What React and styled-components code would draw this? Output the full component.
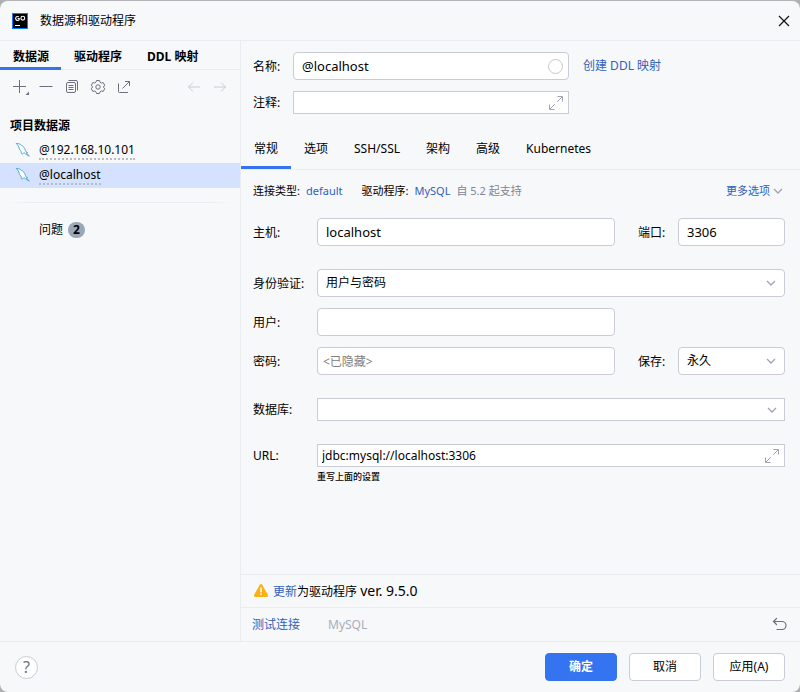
import React from "react";
import styled, { createGlobalStyle, css } from "styled-components";

const GlobalStyle = createGlobalStyle`
  * {
    box-sizing: border-box;
  }
  body {
    margin: 0;
    background: #aeafb1;
    color: #000;
    font-family: "Noto Sans", "Noto Sans CJK SC", sans-serif;
    font-size: 12px;
    line-height: 16px;
  }
  button,
  input,
  select {
    font: inherit;
    color: inherit;
  }
`;

/* ---------- icons ---------- */

const Svg = ({ size = 16, children, ...rest }) => (
  <svg
    width={size}
    height={size}
    viewBox="0 0 16 16"
    fill="none"
    stroke="currentColor"
    aria-hidden="true"
    {...rest}
  >
    {children}
  </svg>
);

const GoLandIcon = () => (
  <Svg stroke="none">
    <rect width="16" height="16" fill="#087cfa" />
    <rect x="1" y="1" width="14" height="14" fill="#000" />
    <path
      d="M6.9 3.9A2 2 0 1 0 7.2 6.7V5.5H5.6"
      fill="none"
      stroke="#fff"
      strokeWidth="1.1"
    />
    <circle cx="10.8" cy="5.2" r="1.9" stroke="#fff" strokeWidth="1.1" />
    <rect x="3" y="12" width="5" height="1" fill="#fff" />
  </Svg>
);

const CloseIcon = () => (
  <Svg strokeWidth="1.2">
    <path d="M3 3l10 10M13 3L3 13" />
  </Svg>
);

const PlusIcon = () => (
  <Svg overflow="visible">
    <path d="M1 7.5h13M7.5 1v13" />
    <path d="M17 12.5V16h-3.5z" fill="currentColor" stroke="none" />
  </Svg>
);

const MinusIcon = () => (
  <Svg>
    <path d="M1.5 7.5h13" />
  </Svg>
);

const CopyIcon = () => (
  <Svg>
    <rect x="2.500" y="3.500" width="9" height="10" rx="1.500" />
    <path d="M4.500 1.500H12A1.500 1.500 0 0 1 13.500 3v8.500M4.500 6.500h5M4.500 8.500h5M4.500 10.500h5" />
  </Svg>
);

const GearIcon = () => (
  <Svg strokeLinejoin="round">
    <path d="M6.500 1.500h3l.6 1.800 1.200.7 1.900-.4 1.500 2.600L13.400 8l1.300 1.800-1.500 2.600-1.900-.4-1.200.7-.6 1.800h-3l-.6-1.800-1.200-.7-1.900.4-1.500-2.600L2.600 8 1.300 6.200l1.500-2.600 1.900.4 1.200-.7z" />
    <circle cx="8" cy="8" r="2.200" />
  </Svg>
);

const ExportIcon = () => (
  <Svg>
    <path d="M2.500 4.500v8.100a.9.9 0 0 0 .9.9H12M9 2.500h4.500V7M13.500 2.500L6.500 9.500" />
  </Svg>
);

const LeftIcon = () => (
  <Svg>
    <path d="M14 8H2.500M7 3.500L2.500 8 7 12.500" />
  </Svg>
);

const RightIcon = () => (
  <Svg>
    <path d="M2 8h11.500M9 3.500L13.500 8 9 12.500" />
  </Svg>
);

const DolphinIcon = () => (
  <Svg stroke="#4aa3cf" strokeLinejoin="round" strokeLinecap="round">
    <path
      d="M1.500 .6C3.300 0 5 1.100 6.100 2.200c2.200.7 3.600 2.600 4.300 5.300.3 1.200 1.200 1.900 2.300 2.200l-1.500.4 3.200 2.900-2.700-1.200c-1-.5-1.500-1.600-2.700-2.200-.7 0-.8 1.500-1.700 1.500-1 0-1.300-1.800-1.200-2.900-1.700-1.200-1.800-2.600-2.300-4.200-.5-1.400-1.200-2.500-2.300-3.400z"
      fill="#fff"
      strokeWidth=".9"
    />
  </Svg>
);

const ExpandIcon = () => (
  <Svg>
    <path d="M9.500 1.500h5v5M14.300 1.700L9.200 6.800M6.500 14.500h-5v-5M1.700 14.300l5.100-5.100" />
  </Svg>
);

const ChevronIcon = () => (
  <Svg strokeWidth="1.300">
    <path d="M4 6l4 4 4-4" />
  </Svg>
);

const WarningIcon = () => (
  <Svg stroke="none">
    <path
      d="M6.600 1.900a1.600 1.600 0 0 1 2.800 0l5.400 9.900a1.500 1.500 0 0 1-1.300 2.200h-11a1.500 1.500 0 0 1-1.300-2.200z"
      fill="#ffaf0f"
    />
    <path d="M7.200 4.500h1.600v5H7.200zM7.200 10.500h1.600V12H7.200z" fill="#fff" />
  </Svg>
);

const UndoIcon = () => (
  <Svg strokeLinecap="round" strokeWidth="1.200">
    <path d="M4.500 1.500L1.500 4.500l3 3M1.800 4.500H10a4 4 0 0 1 0 8H5" />
  </Svg>
);

/* ---------- page ---------- */

const projectSources = ["@192.168.10.101", "@localhost"];
const settingsTabs = ["常规", "选项", "SSH/SSL", "架构", "高级", "Kubernetes"];

const App = () => {
  return (
    <>
      <GlobalStyle />
      <Dialog>
        <TitleBar>
          <GoLandIcon />
          <Title>数据源和驱动程序</Title>
          <IconButton aria-label="关闭" $color="#111">
            <CloseIcon />
          </IconButton>
        </TitleBar>

        <Content>
          <Sidebar>
            <SideTabs role="tablist">
              <SideTab role="tab" aria-selected="true" $active>
                数据源
              </SideTab>
              <SideTab role="tab">驱动程序</SideTab>
              <SideTab role="tab">DDL 映射</SideTab>
            </SideTabs>
            <Toolbar>
              <IconButton aria-label="添加">
                <PlusIcon />
              </IconButton>
              <IconButton aria-label="移除">
                <MinusIcon />
              </IconButton>
              <IconButton aria-label="复制">
                <CopyIcon />
              </IconButton>
              <IconButton aria-label="设置">
                <GearIcon />
              </IconButton>
              <IconButton aria-label="导出">
                <ExportIcon />
              </IconButton>
              <Spacer />
              <IconButton aria-label="后退" $color="#c9ccd6">
                <LeftIcon />
              </IconButton>
              <IconButton aria-label="前进" $color="#c9ccd6">
                <RightIcon />
              </IconButton>
            </Toolbar>
            <GroupTitle>项目数据源</GroupTitle>
            <SourceList>
              {projectSources.map((name) => (
                <SourceItem key={name} $selected={name === "@localhost"}>
                  <DolphinIcon />
                  <SourceName>{name}</SourceName>
                </SourceItem>
              ))}
            </SourceList>
            <Divider />
            <Problems>
              问题 <Badge>2</Badge>
            </Problems>
          </Sidebar>

          <Main>
            <Header>
              <HeaderRow>
                <Label htmlFor="name">名称:</Label>
                <Field>
                  <Input id="name" defaultValue="@localhost" />
                  <FieldIcon $right={6}>
                    <ColorDot />
                  </FieldIcon>
                </Field>
                <HeaderLink href="#ddl">创建 DDL 映射</HeaderLink>
              </HeaderRow>
              <HeaderRow>
                <Label htmlFor="comment">注释:</Label>
                <Field>
                  <Input id="comment" $flat />
                  <FieldIcon $right={5}>
                    <ExpandIcon />
                  </FieldIcon>
                </Field>
              </HeaderRow>
            </Header>

            <MainTabs role="tablist">
              {settingsTabs.map((tab, i) => (
                <MainTab
                  key={tab}
                  role="tab"
                  aria-selected={i === 0}
                  $active={i === 0}
                >
                  {tab}
                </MainTab>
              ))}
            </MainTabs>

            <Form>
              <Connection>
                <span>连接类型:</span>
                <Link href="#type">default</Link>
                <DriverLabel>驱动程序:</DriverLabel>
                <Link href="#driver">MySQL</Link>
                <Muted>自 5.2 起支持</Muted>
                <Spacer />
                <MoreLink href="#more">
                  更多选项
                  <ChevronIcon />
                </MoreLink>
              </Connection>

              <Row $gap={19}>
                <Label htmlFor="host">主机:</Label>
                <Input id="host" defaultValue="localhost" />
                <SideLabel htmlFor="port">端口:</SideLabel>
                <Input id="port" defaultValue="3306" />
              </Row>
              <Row $gap={23}>
                <Label htmlFor="auth">身份验证:</Label>
                <Field $wide>
                  <Select id="auth">
                    <option>用户与密码</option>
                  </Select>
                  <FieldIcon $right={6}>
                    <ChevronIcon />
                  </FieldIcon>
                </Field>
              </Row>
              <Row $gap={11}>
                <Label htmlFor="user">用户:</Label>
                <Input id="user" />
              </Row>
              <Row $gap={11}>
                <Label htmlFor="password">密码:</Label>
                <Input
                  id="password"
                  type="password"
                  placeholder="<已隐藏>"
                  $tight
                />
                <SideLabel htmlFor="save">保存:</SideLabel>
                <Field>
                  <Select id="save">
                    <option>永久</option>
                  </Select>
                  <FieldIcon $right={6}>
                    <ChevronIcon />
                  </FieldIcon>
                </Field>
              </Row>
              <Row $gap={23}>
                <Label htmlFor="database">数据库:</Label>
                <Field $wide>
                  <Select id="database" $flat>
                    <option></option>
                  </Select>
                  <FieldIcon $right={5}>
                    <ChevronIcon />
                  </FieldIcon>
                </Field>
              </Row>
              <Row $gap={23}>
                <Label htmlFor="url">URL:</Label>
                <Field $wide>
                  <Input
                    id="url"
                    defaultValue="jdbc:mysql://localhost:3306"
                    $flat
                  />
                  <FieldIcon $right={5}>
                    <ExpandIcon />
                  </FieldIcon>
                </Field>
                <Hint>重写上面的设置</Hint>
              </Row>
            </Form>

            <UpdateBar>
              <WarningIcon />
              <span>
                <Link href="#update">更新</Link>为驱动程序{" "}
                <Version>ver. 9.5.0</Version>
              </span>
            </UpdateBar>
            <TestBar>
              <Link href="#test">测试连接</Link>
              <DriverName>MySQL</DriverName>
              <Spacer />
              <IconButton aria-label="还原">
                <UndoIcon />
              </IconButton>
            </TestBar>
          </Main>
        </Content>

        <Footer>
          <HelpButton aria-label="帮助">?</HelpButton>
          <Spacer />
          <Button $primary>确定</Button>
          <Button>取消</Button>
          <Button>应用(A)</Button>
        </Footer>
      </Dialog>
    </>
  );
};

export default App;

const line = "#ebecf0";
const border = "#c9ccd6";
const blue = "#3574f0";

const Dialog = styled.div`
  display: flex;
  flex-direction: column;
  min-height: 100vh;
  background: #f7f8fa;
  border-top: 1px solid #b3b4b7;
  border-radius: 8px;
`;

const TitleBar = styled.header`
  display: flex;
  align-items: center;
  height: 40px;
  padding: 0 8px 0 12px;
  border-bottom: 1px solid ${line};
`;

const Title = styled.h1`
  flex: 1;
  margin: 0 0 0 12px;
  font-size: 12px;
  font-weight: 400;
`;

const IconButton = styled.button`
  display: flex;
  padding: 0;
  border: 0;
  background: none;
  color: ${(props) => props.$color || "#6c707e"};
`;

const Spacer = styled.div`
  flex: 1;
`;

const Content = styled.div`
  display: flex;
  flex: 1;
`;

const Sidebar = styled.aside`
  flex: none;
  width: 30%;
  min-width: 220px;
`;

const activeLine = css`
  box-shadow: inset 0 -3px 0 ${blue};
`;

const SideTabs = styled.div`
  display: flex;
  height: 29px;
  border-bottom: 1px solid ${line};
`;

const SideTab = styled.button`
  height: 29px;
  padding: 2px 12px 0 13px;
  border: 0;
  background: none;
  font-weight: 700;
  white-space: nowrap;
  ${(props) => props.$active && activeLine}
`;

const Toolbar = styled.div`
  display: flex;
  align-items: center;
  gap: 10px;
  height: 34px;
  padding: 0 12px;
`;

const GroupTitle = styled.h2`
  margin: 14px 10px 4px;
  font-size: 12px;
  font-weight: 700;
`;

const SourceList = styled.ul`
  margin: 0;
  padding: 0;
  list-style: none;
`;

const SourceItem = styled.li`
  display: flex;
  align-items: center;
  gap: 8px;
  height: 25px;
  padding: 0 15px;
  background: ${(props) => (props.$selected ? "#d4e2ff" : "none")};
`;

const SourceName = styled.span`
  border-bottom: 2px dotted #b9bcc4;
`;

const Divider = styled.hr`
  height: 1px;
  margin: 14px 8px 19px;
  border: 0;
  background: linear-gradient(
    to right,
    transparent,
    ${line} 10%,
    ${line} 90%,
    transparent
  );
`;

const Problems = styled.div`
  display: flex;
  align-items: center;
  gap: 5px;
  padding-left: 39px;
`;

const Badge = styled.span`
  padding: 0 5px;
  border-radius: 8px;
  background: #9aa7b5;
  font-weight: 700;
`;

const Main = styled.main`
  display: flex;
  flex: 1;
  flex-direction: column;
  min-width: 0;
  border-left: 1px solid ${line};
`;

const Header = styled.div`
  display: flex;
  flex-direction: column;
  gap: 11px;
  padding: 11px 12px 14px;
`;

const HeaderRow = styled.div`
  display: grid;
  grid-template-columns: 40px minmax(0, 276fr) 219fr;
  align-items: center;
`;

const Label = styled.label`
  padding-top: 1px;
  white-space: nowrap;
`;

const SideLabel = styled(Label)`
  padding-left: 23px;
`;

const Field = styled.div`
  position: relative;
  display: flex;
  ${(props) => props.$wide && "grid-column: 2 / -1;"}
`;

const FieldIcon = styled.span`
  position: absolute;
  top: 0;
  bottom: 0;
  right: ${(props) => props.$right}px;
  display: flex;
  align-items: center;
  color: #a0a4b2;
  pointer-events: none;
`;

const ColorDot = styled.span`
  width: 15px;
  height: 15px;
  border: 1px solid #c4c7cc;
  border-radius: 50%;
`;

const control = css`
  width: 100%;
  min-width: 0;
  height: ${(props) => (props.$flat ? 23 : 28)}px;
  padding: 0 ${(props) => (props.$flat ? 4 : props.$tight ? 5 : 8)}px;
  border: 1px solid ${border};
  border-radius: ${(props) => (props.$flat ? 0 : 4)}px;
  background: #fff;
  outline: none;
`;

const Input = styled.input`
  ${control}
  font-size: ${(props) => (props.$tight || props.$flat ? 12 : 13)}px;

  &::placeholder {
    color: #808080;
  }
`;

const Select = styled.select`
  ${control}
  appearance: none;
`;

const Link = styled.a`
  color: #315fbd;
  text-decoration: none;
`;

const HeaderLink = styled(Link)`
  margin-left: 14px;
`;

const MoreLink = styled(Link)`
  display: flex;
  align-items: center;

  svg {
    color: #a0a4b2;
  }
`;

const MainTabs = styled.div`
  display: flex;
  height: 42px;
  border-bottom: 1px solid ${line};
`;

const MainTab = styled.button`
  padding: 0 13px;
  border: 0;
  background: none;
  white-space: nowrap;
  ${(props) => props.$active && activeLine}
`;

const Form = styled.form`
  flex: 1;
  padding: 13px 15px 12px 12px;
`;

const Connection = styled.div`
  display: flex;
  align-items: center;
  gap: 6px;
  margin-right: -1px;
  font-size: 11px;
  white-space: nowrap;
`;

const DriverLabel = styled.span`
  margin-left: 13px;
`;

const Muted = styled.span`
  color: #818594;
`;

const Row = styled.div`
  display: grid;
  grid-template-columns: 64px 1fr 63px 107px;
  align-items: center;
  margin-top: ${(props) => props.$gap}px;
`;

const Hint = styled.small`
  grid-column: 2 / -1;
  margin-top: 2px;
  font-size: 9px;
  font-weight: 500;
`;

const UpdateBar = styled.div`
  display: flex;
  align-items: center;
  gap: 4px;
  height: 33px;
  padding: 0 12px;
  border-top: 1px solid ${line};
`;

const Version = styled.span`
  font-size: 14px;
`;

const TestBar = styled.div`
  display: flex;
  align-items: center;
  height: 34px;
  padding: 0 12px 0 11px;
  border-top: 1px solid ${line};
`;

const DriverName = styled.span`
  margin-left: 28px;
  color: #a8adbd;
`;

const Footer = styled.footer`
  display: flex;
  align-items: center;
  gap: 12px;
  height: 51px;
  padding: 0 15px;
  border-top: 1px solid ${line};
`;

const HelpButton = styled.button`
  width: 23px;
  height: 23px;
  padding: 0;
  border: 1px solid ${border};
  border-radius: 50%;
  background: #fff;
  color: #6c707e;
  font-size: 16px;
  line-height: 20px;
`;

const Button = styled.button`
  min-width: 72px;
  height: 28px;
  padding: 0 14px;
  border: 1px solid ${(props) => (props.$primary ? blue : border)};
  border-radius: 4px;
  background: ${(props) => (props.$primary ? blue : "#fff")};
  color: ${(props) => (props.$primary ? "#fff" : "#000")};
  font-weight: ${(props) => (props.$primary ? 700 : 400)};
`;
